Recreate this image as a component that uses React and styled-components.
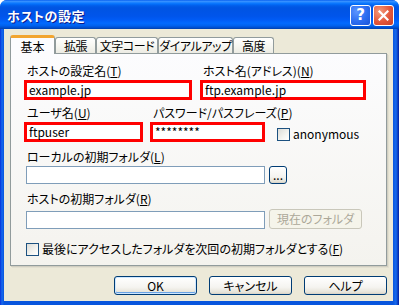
import React from "react";
import styled, { createGlobalStyle, css } from "styled-components";

const GlobalStyle = createGlobalStyle`
  html, body {
    margin: 0;
    padding: 0;
    background: #ffffff;
  }
  body {
    font-family: "Noto Sans CJK JP", "Noto Sans", sans-serif;
    font-size: 12px;
    font-feature-settings: "palt";
    color: #000;
  }
`;

const Window = styled.div`
  width: 399px;
  height: 305px;
  display: flex;
  flex-direction: column;
  border-radius: 7px 7px 0 0;
  overflow: hidden;
  background: #0054e3;
`;

const TitleBar = styled.div`
  height: 29px;
  flex: none;
  display: flex;
  align-items: center;
  justify-content: space-between;
  padding: 1px 5px 0 7px;
  box-sizing: border-box;
  background: linear-gradient(
    to bottom,
    #0058ee 0%,
    #3a93ff 4%,
    #2a8aff 7%,
    #127dff 10%,
    #036ffc 14%,
    #0262ee 18%,
    #0057e5 24%,
    #0054e3 30%,
    #0055eb 56%,
    #005bf5 68%,
    #026afe 80%,
    #0062ef 88%,
    #0052d6 94%,
    #0040ab 100%
  );
`;

const Title = styled.span`
  color: #ffffff;
  font-weight: bold;
  font-size: 13px;
  letter-spacing: 0.5px;
  text-shadow: 1px 1px 0 #0a1a8c;
`;

const CaptionButtons = styled.div`
  display: flex;
  gap: 2px;
`;

const CaptionButton = styled.div`
  width: 21px;
  height: 21px;
  box-sizing: border-box;
  border: 1px solid #ffffff;
  border-radius: 3px;
  display: flex;
  align-items: center;
  justify-content: center;
  color: #ffffff;
  font-family: "DejaVu Sans", sans-serif;
  font-weight: bold;
  font-size: 15px;
  background: radial-gradient(circle at 30% 30%, #5b95ff 0%, #2b6cf0 55%, #1a55d8 100%);
  ${(p) =>
    p.$close &&
    css`
      background: radial-gradient(circle at 30% 30%, #f39b7c 0%, #e3573b 55%, #c8402a 100%);
    `}
`;

const Frame = styled.div`
  flex: 1;
  display: flex;
  padding: 0 6px 4px 4px;
  background: linear-gradient(to right, #0831d9 0, #166aee 2px, #0855dd 4px, #0855dd calc(100% - 6px), #166aee calc(100% - 3px), #001ea0 100%);
`;

const Body = styled.div`
  flex: 1;
  display: flex;
  flex-direction: column;
  background: #ece9d8;
  padding: 6px 6px 0 6px;
`;

const TabStrip = styled.div`
  display: flex;
  align-items: flex-end;
  height: 19px;
  margin-bottom: -1px;
  position: relative;
  z-index: 1;
`;

const Tab = styled.div`
  width: ${(p) => p.$w}px;
  flex: none;
  height: 16px;
  margin-bottom: 1px;
  box-sizing: border-box;
  border: 1px solid #919b9c;
  border-bottom: none;
  border-radius: 3px 3px 0 0;
  background: linear-gradient(to bottom, #ffffff 0%, #f7f7f2 50%, #ecebe3 100%);
  display: flex;
  align-items: center;
  justify-content: center;
  line-height: 14px;
  white-space: nowrap;
  letter-spacing: -0.4px;
  ${(p) =>
    p.$active &&
    css`
      height: 19px;
      margin-bottom: 0;
      background: #fcfcfe;
      border-top: 3px solid #f2a530;
      padding-top: 1px;
      letter-spacing: 0;
    `}
`;

const Panel = styled.div`
  height: 213px;
  box-sizing: border-box;
  border: 1px solid #919b9c;
  box-shadow: 1px 1px 0 #d0cec1, 2px 2px 0 #e2dfd0;
  background: linear-gradient(to bottom, #fcfcfe 0%, #f4f3ee 100%);
  padding: 10px 0 0 13px;
  display: flex;
  flex-direction: column;
`;

const Row = styled.div`
  display: flex;
  align-items: flex-end;
  gap: ${(p) => p.$gap || 0}px;
  margin-top: ${(p) => p.$top || 0}px;
  margin-left: ${(p) => p.$left || 0}px;
`;

const Field = styled.div`
  display: flex;
  flex-direction: column;
  width: ${(p) => p.$w}px;
`;

const Label = styled.div`
  height: 14px;
  line-height: 14px;
  margin-left: ${(p) => p.$indent ?? 3}px;
  margin-bottom: ${(p) => p.$gap ?? 2}px;
  white-space: nowrap;

  u {
    text-decoration: underline;
    text-underline-offset: 1px;
  }
`;

const MarkedInput = styled.div`
  height: 20px;
  box-sizing: border-box;
  border: 3px solid #ff0000;
  background: #ffffff;
  padding: 0 2px;
  line-height: 14px;
  font-size: 12px;
  white-space: nowrap;
`;

const TextBox = styled.div`
  width: ${(p) => p.$w}px;
  height: 18px;
  box-sizing: border-box;
  border: 1px solid #7f9db9;
  background: #ffffff;
`;

const Button = styled.div`
  width: ${(p) => p.$w}px;
  height: ${(p) => p.$h || 19}px;
  box-sizing: border-box;
  border: 1px solid #003c74;
  border-radius: 3px;
  background: linear-gradient(to bottom, #ffffff 0%, #f5f4f0 60%, #e6e3d8 90%, #d6d0c5 100%);
  display: flex;
  align-items: center;
  justify-content: center;
  line-height: 14px;
  white-space: nowrap;
  ${(p) =>
    p.$default &&
    css`
      box-shadow: inset 0 0 0 1px #cee7ff, inset 0 -1px 0 1px #69a2e4;
    `}
  ${(p) =>
    p.$disabled &&
    css`
      border-color: #c9c7ba;
      background: #f5f4ea;
      color: #aca899;
    `}
`;

const CheckGroup = styled.div`
  display: flex;
  align-items: center;
  gap: 3px;
  margin-left: ${(p) => p.$left || 0}px;
  margin-top: ${(p) => p.$top || 0}px;
  margin-bottom: ${(p) => p.$bottom || 0}px;
  white-space: nowrap;
  line-height: 14px;

  u {
    text-decoration: underline;
  }
`;

const CheckBox = styled.div`
  width: 13px;
  height: 13px;
  box-sizing: border-box;
  border: 1px solid #1c5180;
  background: linear-gradient(135deg, #dcdcd7 0%, #f4f4f0 60%, #ffffff 100%);
`;

const ButtonRow = styled.div`
  display: flex;
  justify-content: flex-end;
  gap: 12px;
  margin-top: 10px;
`;

const CloseIcon = () => (
  <svg width="11" height="11" viewBox="0 0 11 11">
    <path d="M1.5 1.5 L9.5 9.5 M9.5 1.5 L1.5 9.5" stroke="#fff" strokeWidth="2.2" strokeLinecap="square" />
  </svg>
);

const App = () => {
  return (
    <Window>
      <GlobalStyle />
      <TitleBar>
        <Title>ホストの設定</Title>
        <CaptionButtons>
          <CaptionButton>?</CaptionButton>
          <CaptionButton $close>
            <CloseIcon />
          </CaptionButton>
        </CaptionButtons>
      </TitleBar>
      <Frame>
        <Body>
          <TabStrip>
            <Tab $w={45} $active>基本</Tab>
            <Tab $w={41}>拡張</Tab>
            <Tab $w={62}>文字コード</Tab>
            <Tab $w={75}>ダイアルアップ</Tab>
            <Tab $w={41}>高度</Tab>
          </TabStrip>
          <Panel>
            <Row $gap={8}>
              <Field $w={168}>
                <Label>
                  ホストの設定名(<u>T</u>)
                </Label>
                <MarkedInput>example.jp</MarkedInput>
              </Field>
              <Field $w={166}>
                <Label>
                  ホスト名(アドレス)(<u>N</u>)
                </Label>
                <MarkedInput>ftp.example.jp</MarkedInput>
              </Field>
            </Row>
            <Row $gap={7} $top={6}>
              <Field $w={119}>
                <Label>
                  ユーザ名(<u>U</u>)
                </Label>
                <MarkedInput>ftpuser</MarkedInput>
              </Field>
              <Field $w={115}>
                <Label>
                  パスワード/パスフレーズ(<u>P</u>)
                </Label>
                <MarkedInput>********</MarkedInput>
              </Field>
              <CheckGroup $left={5} $bottom={1}>
                <CheckBox />
                <span>anonymous</span>
              </CheckGroup>
            </Row>
            <Row $top={8} $left={2}>
              <Field $w={300}>
                <Label $indent={1}>
                  ローカルの初期フォルダ(<u>L</u>)
                </Label>
                <Row $gap={4}>
                  <TextBox $w={239} />
                  <Button $w={18} $h={18}>...</Button>
                </Row>
              </Field>
            </Row>
            <Row $top={8} $left={2}>
              <Field $w={340}>
                <Label $indent={1} $gap={3}>
                  ホストの初期フォルダ(<u>R</u>)
                </Label>
                <Row $gap={4}>
                  <TextBox $w={239} />
                  <Button $w={93} $h={20} $disabled>
                    現在のフォルダ
                  </Button>
                </Row>
              </Field>
            </Row>
            <CheckGroup $left={2} $top={13}>
              <CheckBox />
              <span>
                最後にアクセスしたフォルダを次回の初期フォルダとする(<u>F</u>)
              </span>
            </CheckGroup>
          </Panel>
          <ButtonRow>
            <Button $w={83} $default>OK</Button>
            <Button $w={83}>キャンセル</Button>
            <Button $w={83}>ヘルプ</Button>
          </ButtonRow>
        </Body>
      </Frame>
    </Window>
  );
};

export default App;
